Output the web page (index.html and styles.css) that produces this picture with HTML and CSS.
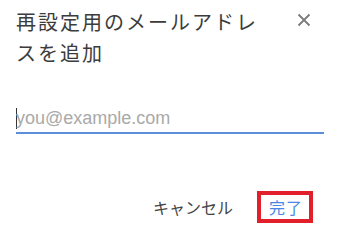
FILE: index.html
```html
<!DOCTYPE html>
<html lang="ja">
<head>
<meta charset="utf-8">
<link rel="stylesheet" href="styles.css">
</head>
<body>
<div class="dialog">
  <div class="header">
    <h1 class="title">再設定用のメールアドレスを追加</h1>
    <span class="close" aria-label="閉じる">
      <svg width="14" height="14" viewBox="0 0 14 14"><path d="M1.5 1.5 L12.5 12.5 M12.5 1.5 L1.5 12.5" stroke="#7a7a7a" stroke-width="1.8" fill="none"/></svg>
    </span>
  </div>
  <div class="field">
    <span class="caret"></span><span class="placeholder">you@example.com</span>
  </div>
  <div class="actions">
    <span class="btn cancel">キャンセル</span>
    <span class="btn done">完了</span>
  </div>
</div>
</body>
</html>
```
FILE: styles.css
```css
html, body {
  margin: 0;
  background: #ffffff;
}
body {
  font-family: "Noto Sans CJK JP", "Liberation Sans", sans-serif;
  width: 340px;
  height: 241px;
  overflow: hidden;
}
.dialog {
  padding: 6px 16px 0 16px;
}
.header {
  display: flex;
  justify-content: space-between;
  align-items: flex-start;
}
.title {
  margin: 0;
  width: 256px;
  font-size: 20px;
  font-weight: 400;
  line-height: 31px;
  letter-spacing: 2px;
  color: #3c3c3c;
}
.close {
  display: block;
  width: 14px;
  height: 14px;
  margin-top: 7px;
  margin-right: 13px;
}
.close svg {
  display: block;
}
.field {
  margin-top: 39px;
  height: 23px;
  padding-bottom: 2px;
  border-bottom: 2px solid #5b8fdc;
  display: flex;
  align-items: center;
}
.caret {
  display: inline-block;
  width: 1px;
  height: 21px;
  background: #333;
  margin-right: -1px;
}
.placeholder {
  font-family: "Liberation Sans", Arial, sans-serif;
  font-size: 18px;
  color: #a9a9a9;
}
.actions {
  display: flex;
  justify-content: flex-end;
  align-items: center;
  gap: 24px;
  margin-top: 57px;
  margin-right: 11px;
}
.btn {
  font-size: 16px;
  line-height: 24px;
}
.cancel {
  color: #444;
}
.done {
  color: #4a86e8;
  border: 4px solid #e1202b;
  padding: 0 6px 0 8px;
  letter-spacing: 1px;
}
```
